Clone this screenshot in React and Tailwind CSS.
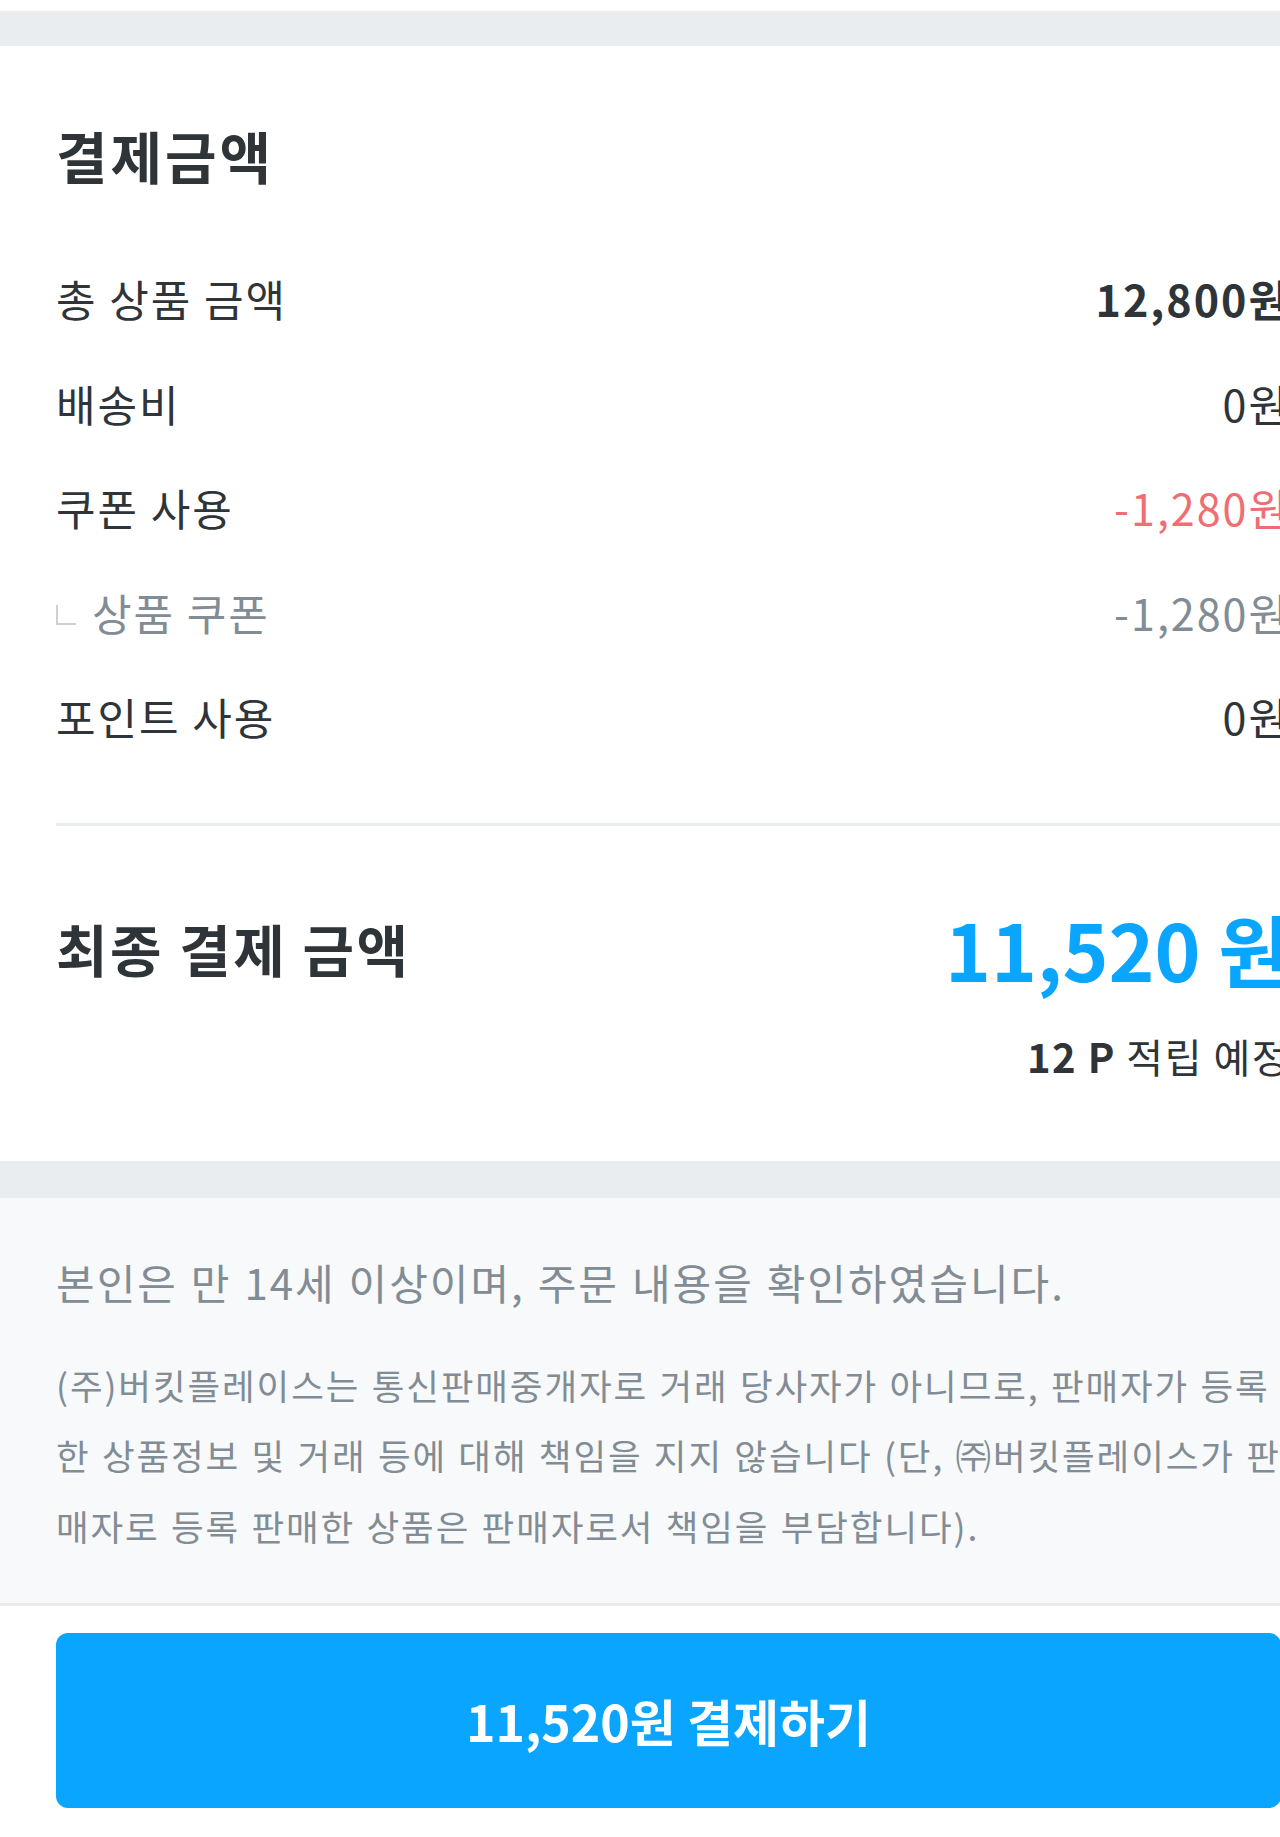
import React from "react";

const rows = [
  { label: "총 상품 금액", value: "12,800원", valueClass: "font-bold text-[#2f3438]", sub: false },
  { label: "배송비", value: "0원", valueClass: "text-[#2f3438]", sub: false },
  { label: "쿠폰 사용", value: "-1,280원", valueClass: "text-[#f06e73]", sub: false },
  { label: "상품 쿠폰", value: "-1,280원", valueClass: "text-[#828c94]", sub: true },
  { label: "포인트 사용", value: "0원", valueClass: "text-[#2f3438]", sub: false },
];

function Row({ label, value, valueClass, sub }) {
  return (
    <div className="flex h-[104.5px] items-center justify-between whitespace-nowrap text-[43px] leading-[52px] tracking-[2px]">
      {sub ? (
        <div className="flex items-center">
          <span className="mr-[16px] mt-[6px] block h-[20px] w-[20px] border-b-[2px] border-l-[2px] border-[#ccd1d5]" />
          <span className="text-[#828c94]">{label}</span>
        </div>
      ) : (
        <span className="text-[#2f3438]">{label}</span>
      )}
      <span className={valueClass}>{value}</span>
    </div>
  );
}

export default function App() {
  return (
    <div className="w-full overflow-hidden bg-white font-['Noto_Sans_CJK_KR','Noto_Sans',sans-serif] text-[#2f3438]">
      <div className="h-[11px] bg-white" />
      <div className="h-[35px] bg-[#eaedf0]" />

      <section className="w-[1346px] px-[56px] pb-[81px] pt-[75px]">
        <h2 className="text-[56px] font-bold leading-[67px] tracking-[3px]">결제금액</h2>
        <div className="mt-[58px]">
          {rows.map((r) => (
            <Row key={r.label} {...r} />
          ))}
        </div>
        <div className="mt-[54px] h-[3px] bg-[#eaedf0]" />
        <div className="mt-[75px] flex items-center justify-between whitespace-nowrap">
          <span className="text-[56px] font-bold leading-[67px] tracking-[2.5px]">최종 결제 금액</span>
          <span className="text-[78px] font-bold leading-[94px] text-[#0aa5ff]">11,520 원</span>
        </div>
        <div className="mt-[37px] whitespace-nowrap text-right text-[40px] leading-[48px] tracking-[1.5px] text-[#2f3438]">
          <span className="font-bold">12 P</span> 적립 예정
        </div>
      </section>

      <div className="h-[37px] bg-[#eaedf0]" />

      <section className="border-b-[3px] border-[#eaedf0] bg-[#f7f9fa]">
        <div className="w-[1346px] px-[56px] pb-[42px] pt-[60.5px] text-[#828c94]">
          <p className="whitespace-nowrap text-[42px] leading-[48px] tracking-[2px] [word-spacing:1.5px]">
            본인은 만 14세 이상이며, 주문 내용을 확인하였습니다.
          </p>
          <div className="mt-[43.5px] text-[35.5px] leading-[70.5px] tracking-[1.9px] [word-spacing:1.5px]">
            <p className="whitespace-nowrap">(주)버킷플레이스는 통신판매중개자로 거래 당사자가 아니므로, 판매자가 등록</p>
            <p className="whitespace-nowrap">한 상품정보 및 거래 등에 대해 책임을 지지 않습니다 (단, ㈜버킷플레이스가 판</p>
            <p className="whitespace-nowrap">매자로 등록 판매한 상품은 판매자로서 책임을 부담합니다).</p>
          </div>
        </div>
      </section>

      <div className="w-[1346px] px-[56px] pb-[29px] pt-[27px]">
        <button className="flex h-[175px] w-[1225px] items-center justify-center rounded-[12px] bg-[#0aa5ff] text-[50px] font-bold text-white">
          11,520원 결제하기
        </button>
      </div>
    </div>
  );
}
